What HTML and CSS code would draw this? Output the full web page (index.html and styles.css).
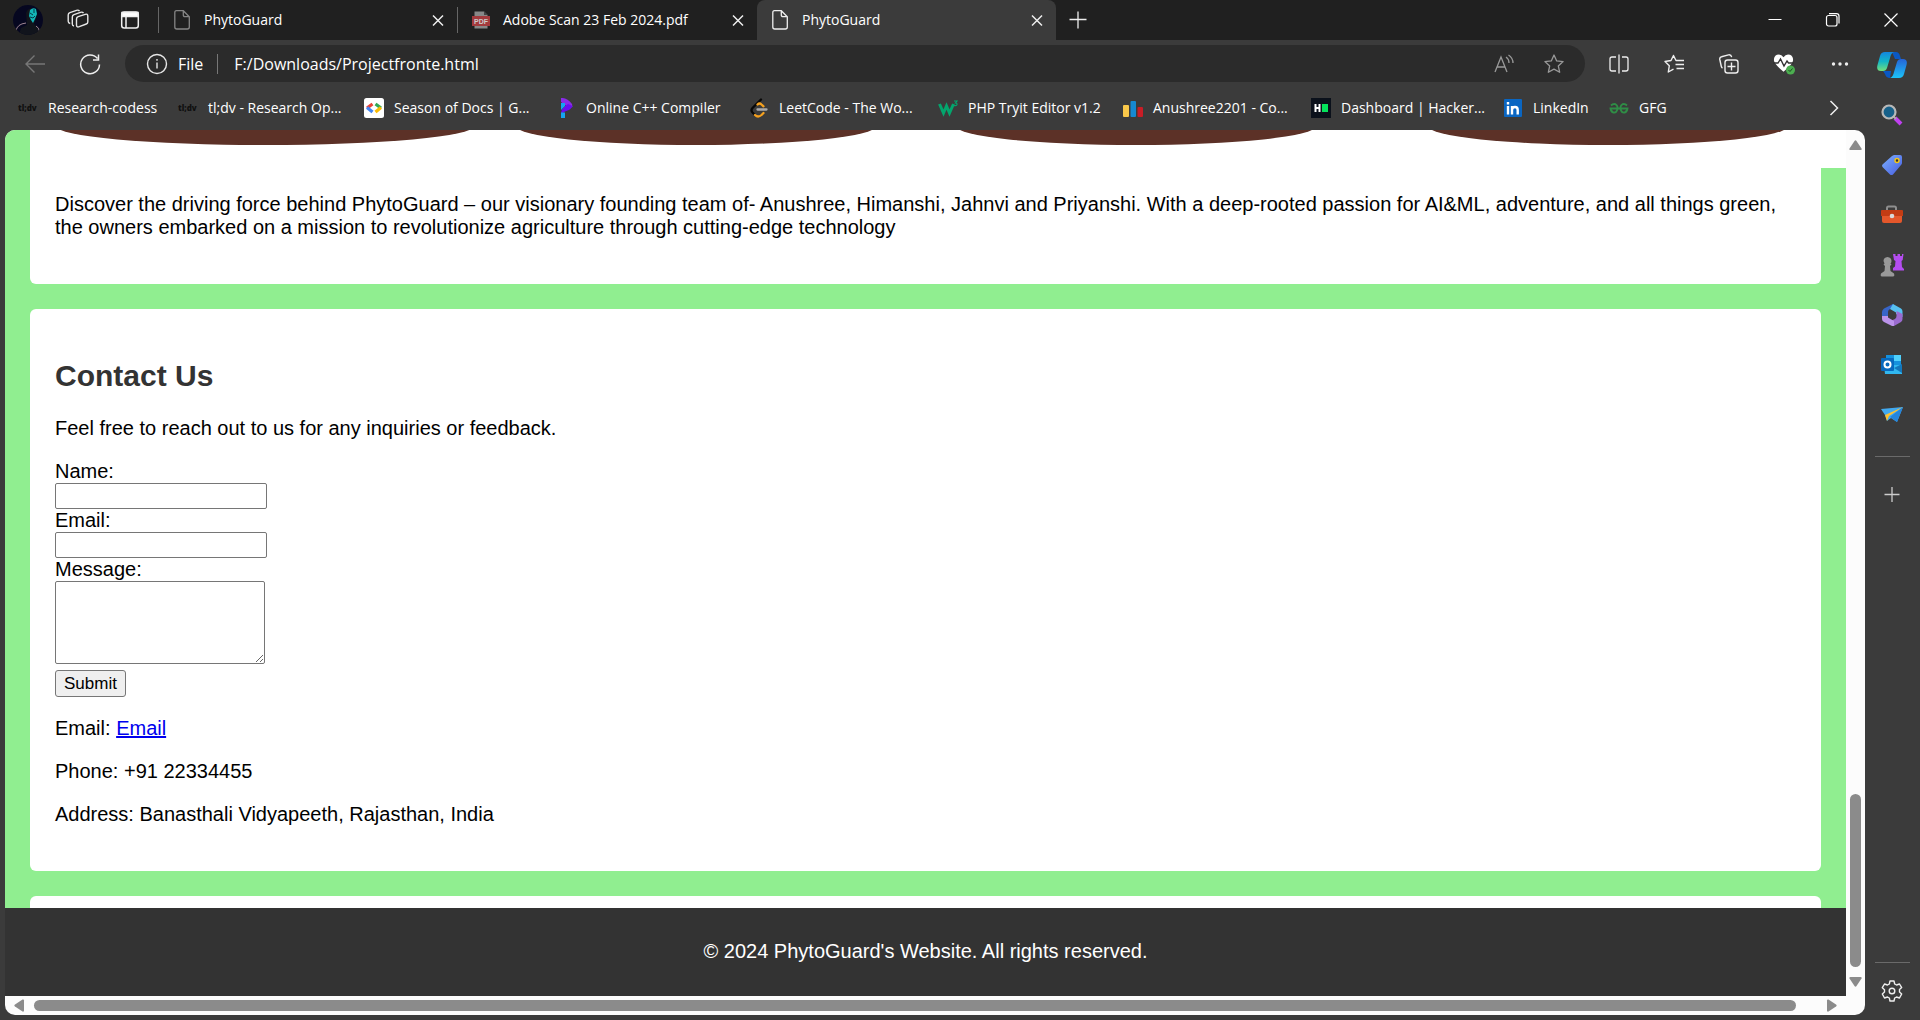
FILE: index.html
```html
<!DOCTYPE html>
<html lang="en">
<head>
<meta charset="utf-8">
<title>PhytoGuard</title>
<link rel="stylesheet" href="styles.css">
</head>
<body>
<header class="titlebar">
  <div class="title-tools">
    <button class="icon-btn" aria-label="Profile"><svg width="30" height="30" viewBox="0 0 30 30"><defs><clipPath id="av"><circle cx="15" cy="15" r="15"/></clipPath></defs><g clip-path="url(#av)"><path fill="#060720" d="M0 0h30v30H0z"/><path fill="#11141c" d="M13 8q2-6 8-4 4 4 2 10l-2 5 5 4 2 7H6l2-7 6-3z"/><path fill="#12b5b8" d="M17 5q3-3 6-1l1 5-2 5-2 4-2-3-2-4z"/><path stroke="#063a4a" d="M17 8l3 2m-3 2 3 1M21 4v4m1 3-2 2"/><path d="M3 26q1-7 10-8M27 28q-1-6-4-7" stroke="#a08694" fill="none"/></g></svg></button>
    <button class="icon-btn" aria-label="Workspaces"><svg width="22" height="22" viewBox="0 0 22 22" fill="none" stroke="#e6e6e6" stroke-width="1.4"><path d="M9.500 10q0-1.700 1.700-2.300l7-2.400q2.600-.8 2.600 1.700v6q0 1.500-1.500 2l-7 2.700q-2.800 1-2.800-1.700zM7 17q-1.700-.3-1.700-2V8q0-1.700 1.700-2.300l6.500-2.400q2-.7 3 .9M3.200 14.500q-2-.4-2-2.200V6q0-1.700 1.700-2.300L9.500 1.300q2-.7 3 .9"/></svg></button>
    <button class="icon-btn" aria-label="Tab actions"><svg width="20" height="20" viewBox="0 0 20 20" fill="none" stroke="#f0f0f0" stroke-width="1.500"><rect x="1.700" y="2" width="16.600" height="16" rx="2.500"/><path fill="#fff" d="M2 2.500h16v4H2z"/><path d="M6 7v11"/></svg></button>
  </div>
  <nav class="tabs" aria-label="Tabs">
    <div class="tab">
      <svg class="i20" viewBox="0 0 20 20" fill="none" stroke="#858585" stroke-width="1.300"><path d="M4.500.7h6.800l6 6V17q0 2-2 2h-10.500q-2 0-2-2V2.700q0-2 1.700-2zM11.300.7v4.300q0 1.700 1.700 1.700h4.300"/></svg>
      <span class="tab-title">PhytoGuard</span>
      <button class="close" aria-label="Close tab"><svg class="i20" viewBox="0 0 20 20" stroke="#eee" stroke-width="1.500"><path d="M5 5.500l10 10M15 5.500l-10 10"/></svg></button>
    </div>
    <div class="tab">
      <svg class="i20" viewBox="0 0 20 20"><path d="M3 1h10l4 4v14H3z" fill="#888" stroke="#202020"/><path d="M13 1v4h4" fill="#444"/><rect x="1" y="6" width="18" height="10" fill="#a33a3d"/><text x="10" y="14" class="pdf-mark">PDF</text></svg>
      <span class="tab-title">Adobe Scan 23 Feb 2024.pdf</span>
      <button class="close" aria-label="Close tab"><svg class="i20" viewBox="0 0 20 20" stroke="#eee" stroke-width="1.500"><path d="M5 5.500l10 10M15 5.500l-10 10"/></svg></button>
    </div>
    <div class="tab tab-active">
      <svg class="i20" viewBox="0 0 20 20" fill="none" stroke="#eee" stroke-width="1.300"><path d="M4.500.7h6.800l6 6V17q0 2-2 2h-10.500q-2 0-2-2V2.700q0-2 1.700-2zM11.300.7v4.300q0 1.700 1.700 1.700h4.300"/></svg>
      <span class="tab-title">PhytoGuard</span>
      <button class="close" aria-label="Close tab"><svg class="i20" viewBox="0 0 20 20" stroke="#eee" stroke-width="1.500"><path d="M5 5.500l10 10M15 5.500l-10 10"/></svg></button>
    </div>
    <button class="icon-btn new-tab" aria-label="New tab"><svg class="i20" viewBox="0 0 20 20" stroke="#eee" stroke-width="1.300"><path d="M10 1.500v17M1.500 9.500h17"/></svg></button>
  </nav>
  <div class="window-controls">
    <button class="icon-btn" aria-label="Minimize"><svg class="i20" viewBox="0 0 20 20" stroke="#fff"><path d="M3.500 9.500h13"/></svg></button>
    <button class="icon-btn" aria-label="Restore"><svg class="i20" viewBox="0 0 20 20" fill="none" stroke="#fff" stroke-width="1.200"><rect x="3.500" y="5.500" width="10.500" height="10.500" rx="2"/><path d="M6 3.600h7.500q2.500 0 2.500 2.500v7.500"/></svg></button>
    <button class="icon-btn" aria-label="Close window"><svg class="i20" viewBox="0 0 20 20" stroke="#fff" stroke-width="1.200"><path d="M3.500 3.500l13 13M16.500 3.500l-13 13"/></svg></button>
  </div>
</header>

<div class="frame">
  <div class="browser">
    <div class="toolbar">
      <button class="icon-btn back" aria-label="Back"><svg class="i20" viewBox="0 0 20 20" fill="none" stroke="#777" stroke-width="1.400"><path d="M20 10H1M9.500 1.500L1 10l8.500 8.500"/></svg></button>
      <button class="icon-btn reload" aria-label="Refresh"><svg width="22" height="22" viewBox="0 0 22 22" fill="none" stroke="#eee" stroke-width="1.500"><path d="M20.500 11.500A9.400 9.400 0 1 1 18.500 5.500M19.500 1.500v5.500H14"/></svg></button>
      <div class="address">
        <svg class="info" width="22" height="22" viewBox="0 0 22 22" fill="none" stroke="#e6e6e6" stroke-width="1.400"><circle cx="11" cy="11" r="9.500"/><path d="M11 9.500v6M11 6v1.700"/></svg>
        <span class="scheme">File</span>
        <input class="url" type="text" aria-label="Address" value="F:/Downloads/Projectfronte.html">
        <button class="icon-btn" aria-label="Read aloud"><svg class="i20" viewBox="0 0 20 20" fill="none" stroke="#999" stroke-width="1.300"><path d="M1 18L7 3l6 15M3 13h8M12 3q3 2 3 6M14.500 1q4.500 3 4.500 8"/></svg></button>
        <button class="icon-btn" aria-label="Add to favorites"><svg class="i20" viewBox="0 0 20 20" fill="none" stroke="#999" stroke-width="1.300" stroke-linejoin="round"><path d="M10 1l2.700 5.900 6.400.7-4.800 4.300 1.400 6.400L10 15.100l-5.700 3.200 1.400-6.400L.9 7.600l6.400-.7z"/></svg></button>
      </div>
      <div class="actions">
        <button class="icon-btn" aria-label="Split screen"><svg class="i20" viewBox="0 0 20 20" fill="none" stroke="#eee" stroke-width="1.300"><path d="M7 3H3Q1 3 1 5v10q0 2 2 2h4M13 3h4q2 0 2 2v10q0 2-2 2h-4M10 .5v19"/></svg></button>
        <button class="icon-btn" aria-label="Favorites"><svg class="i20" viewBox="0 0 20 20" fill="none" stroke="#eee" stroke-width="1.400" stroke-linejoin="round"><path d="M13 6.500h-1L9.500 1.500 7 6.500l-6 1 4.300 4.300L4.300 18l5.200-2.800M13 6.500h7M11.500 10.500H20M12.500 14.500H20"/></svg></button>
        <button class="icon-btn" aria-label="Collections"><svg class="i20" viewBox="0 0 20 20" fill="none" stroke="#eee" stroke-width="1.400"><rect x="6" y="6" width="13" height="13" rx="2.500"/><path d="M12.500 8.500v8M8.500 12.500h8M3.500 14q-1-.5-1.300-2L.8 5.500Q.4 3.300 2.500 2.800L9.500.9q2.500-.5 3.200 2.300"/></svg></button>
        <button class="icon-btn" aria-label="Browser essentials"><svg width="22" height="22" viewBox="0 0 22 22"><path fill="#fff" d="M10.500 4.200Q13 .5 17 1.800q3.500 1.500 3 6-.5 3.500-9.500 11-9-7.500-9.500-11-.5-4.500 3-6 4-1.300 6.500 2.400z"/><path d="M0 10h5l2.500-4 3.500 7 3-5 1.500 2H21" fill="none" stroke="#333" stroke-width="1.400"/><circle cx="17.500" cy="17" r="4.500" fill="#4cae50"/><path d="M15.500 17l1.500 1.500 2.500-3" fill="none" stroke="#1d4d20"/></svg></button>
        <button class="icon-btn" aria-label="Settings and more"><svg class="i20" viewBox="0 0 20 20" fill="#eee"><circle cx="3.500" cy="10" r="1.700"/><circle cx="10" cy="10" r="1.700"/><circle cx="16.500" cy="10" r="1.700"/></svg></button>
      </div>
    </div>

    <nav class="bookmarks" aria-label="Favorites bar">
      <a class="bookmark" href="#"><span class="tldv">tl;dv</span>Research-codess</a>
      <a class="bookmark" href="#"><span class="tldv">tl;dv</span>tl;dv - Research Op...</a>
      <a class="bookmark" href="#"><svg class="i20" viewBox="0 0 20 20" fill="none" stroke-width="3.200"><rect width="20" height="20" rx="2.500" fill="#fff"/><path d="M8.500 6L3 10" stroke="#ea4335"/><path d="M3 9.500L8.500 14" stroke="#4285f4"/><path d="M11.500 6l5.500 4" stroke="#34a853"/><path d="M17 9.500L11.500 14" stroke="#fbbc04"/></svg>Season of Docs | G...</a>
      <a class="bookmark" href="#"><svg class="i20" viewBox="0 0 20 20"><path fill="#8a2be8" d="M5 0q6-.5 11 6l.5 3L13 10 5 4z"/><path fill="#6a0df0" d="M16.500 8Q15 12 9 13.500L5 16q0-6 7-10z"/><path fill="#14a5f0" d="M5 5h4v3l-4 4zM5 14.500h4V20H5z"/></svg>Online C++ Compiler</a>
      <a class="bookmark" href="#"><svg class="i20" viewBox="0 0 20 20" fill="none" stroke-width="2.300" stroke-linecap="round"><path stroke="#080808" d="M12 1.500L3.500 10q-2 2.300 0 4.500l2.500 2.500"/><path stroke="#f5a11f" d="M8.500 6.500q2-2 4 0l2 1.800M6 17q3 3 6.500 0l2-2"/><path stroke="#aaa" d="M8.500 11.500h9"/></svg>LeetCode - The Wo...</a>
      <a class="bookmark" href="#"><svg class="i20" viewBox="0 0 20 20" fill="none" stroke="#04a56d"><path stroke-width="3" d="M1.500 6l4 9 3-7 3 7 4-9"/><path d="M16 3h3l-1.500 2q2 0 1.300 2-.8 1-2.800.5" stroke-width="1.200"/></svg>PHP Tryit Editor v1.2</a>
      <a class="bookmark" href="#"><svg class="i20" viewBox="0 0 20 20"><rect y="7" width="6" height="12" rx="1" fill="#fac84a"/><rect x="7.500" y="3" width="5.500" height="16" rx="1" fill="#1689d2"/><rect x="14.500" y="9" width="5.500" height="10" rx="1" fill="#c91d26"/></svg>Anushree2201 - Co...</a>
      <a class="bookmark" href="#"><svg class="i20" viewBox="0 0 20 20"><path fill="#0b111b" d="M0 0h20v20H0z"/><path d="M4.500 6v8M8.500 6v8M4 10h5" stroke="#fff" stroke-width="2"/><path fill="#05e35c" d="M11 6h6v8h-6z"/></svg>Dashboard | Hacker...</a>
      <a class="bookmark" href="#"><svg class="i20" viewBox="0 0 20 20"><rect x="1" y="1" width="18" height="18" rx="1" fill="#0a66c2"/><path fill="none" stroke="#fff" stroke-width="2.400" d="M5 8v8.500M9 8v8.500M9 12q0-3 3-3 2.700 0 2.700 3v4.500M5 4v2.500"/></svg>LinkedIn</a>
      <a class="bookmark" href="#"><svg class="i20" viewBox="0 0 20 20" fill="none" stroke="#2f8d46" stroke-width="1.800"><path d="M2 7.500Q4 5.500 6.500 6.200 9 7.500 8.500 11q-1 4-4 3.500-2.500-.5-3-4h17q-.5 3.500-3 4-3 .5-4-3.500-.5-3.500 2-4.800Q16 5.500 18 7.500"/></svg>GFG</a>
      <button class="icon-btn overflow" aria-label="More favorites"><svg class="i20" viewBox="0 0 20 20" fill="none" stroke="#eee" stroke-width="1.500"><path d="M6.500 3l7 7-7 7"/></svg></button>
    </nav>

    <div class="viewport">
      <div class="page">
        <main class="sections">
          <section class="card team">
            <svg class="portraits" viewBox="0 0 1791 38" preserveAspectRatio="none"><g fill="#5c3127"><ellipse cx="210" cy="-4" rx="209" ry="19"/><ellipse cx="641" cy="-4" rx="180" ry="19"/><ellipse cx="1081" cy="-4" rx="180" ry="19"/><ellipse cx="1553" cy="-4" rx="180" ry="19"/></g></svg>
            <p>Discover the driving force behind PhytoGuard – our visionary founding team of- Anushree, Himanshi, Jahnvi and Priyanshi. With a deep-rooted passion for AI&amp;ML, adventure, and all things green, the owners embarked on a mission to revolutionize agriculture through cutting-edge technology</p>
          </section>
          <section class="card">
            <h2>Contact Us</h2>
            <p>Feel free to reach out to us for any inquiries or feedback.</p>
            <form class="contact-form">
              <label for="name">Name:</label>
              <input class="field" type="text" id="name">
              <label for="email">Email:</label>
              <input class="field" type="email" id="email">
              <label for="message">Message:</label>
              <textarea class="message" id="message"></textarea>
              <button class="submit" type="submit">Submit</button>
            </form>
            <p>Email: <a href="#">Email</a></p>
            <p>Phone: +91 22334455</p>
            <p>Address: Banasthali Vidyapeeth, Rajasthan, India</p>
          </section>
          <section class="card card-next"></section>
        </main>
        <footer class="footer">© 2024 PhytoGuard's Website. All rights reserved.</footer>
      </div>
      <div class="scroll-y">
        <svg width="13" height="11" viewBox="0 0 13 11"><path fill="#8b8b8b" d="M5.500 1q1-1.300 2 0l5 7.500q.5 1.500-1 1.500h-10Q0 10 .5 8.500z"/></svg>
        <div class="thumb-y"></div>
        <svg width="13" height="11" viewBox="0 0 13 11"><path fill="#8b8b8b" d="M5.500 10q1 1.300 2 0l5-7.500Q13 1 11.500 1h-10Q0 1 .5 2.500z"/></svg>
      </div>
      <div class="scroll-x">
        <svg width="11" height="13" viewBox="0 0 11 13"><path fill="#8b8b8b" d="M1 5.500q-1.300 1 0 2l7.500 5q1.500.5 1.500-1v-10Q10 0 8.500.5z"/></svg>
        <div class="thumb-x"></div>
        <svg width="11" height="13" viewBox="0 0 11 13"><path fill="#8b8b8b" d="M10 5.500q1.300 1 0 2l-7.500 5Q1 13 1 11.500v-10Q1 0 2.500.5z"/></svg>
      </div>
    </div>
  </div>

  <aside class="sidebar">
    <button class="icon-btn copilot" aria-label="Copilot"><svg width="30" height="28" viewBox="0 0 30 28"><defs><linearGradient id="c1" x2="0" y2="1"><stop stop-color="#1386e0"/><stop offset=".5" stop-color="#12b5c7"/><stop offset="1" stop-color="#73e07b"/></linearGradient><linearGradient id="c2" x2="0" y2="1"><stop stop-color="#2563d8"/><stop offset="1" stop-color="#1cc3f7"/></linearGradient></defs><path fill="#0a58c4" d="M15 1h4q3 0 4 4l1 3h-6zM6 20h8l-1 7q-4 0-5-4z"/><path fill="url(#c1)" d="M8 1h9q-3 1-4 6l-3 10q-1 3-4 3H4q-5 0-3.500-6L3 5q1-4 5-4z"/><path fill="url(#c2)" d="M22 27h-9q3-1 4-6l3-10q1-3 4-3h2q5 0 3.500 6L27 23q-1 4-5 4z"/></svg></button>
    <button class="icon-btn" aria-label="Search"><svg width="22" height="22" viewBox="0 0 22 22"><path d="M14 14l6 6" stroke="#c040f0" stroke-width="4"/><path d="M12 12l3 3" stroke="#aaa" stroke-width="2"/><circle cx="8" cy="8" r="6.500" fill="#17618a" stroke="#b8b8b8" stroke-width="2.200"/></svg></button>
    <button class="icon-btn" aria-label="Shopping"><svg width="22" height="22" viewBox="0 0 22 22"><defs><linearGradient id="tg" x2="1" y2="1"><stop stop-color="#7db2ff"/><stop offset="1" stop-color="#465be0"/></linearGradient></defs><path fill="url(#tg)" d="M13 1h6q2 0 2 2v6q0 1-1 2l-8 9.500q-1.500 1-3 0L1.500 13q-1-1.500 0-2.500L11 2z"/><circle cx="16" cy="6.500" r="2" fill="#333" stroke="#f2c51a" stroke-width="1.500"/></svg></button>
    <button class="icon-btn" aria-label="Tools"><svg width="24" height="22" viewBox="0 0 24 22"><path d="M7 7V4q0-1.500 1.500-1.500h6Q16 2.500 16 4v3" fill="none" stroke="#8e8e8e" stroke-width="2"/><path fill="#e4572b" d="M2 10h20v7q0 2-2 2H4q-2 0-2-2z"/><path fill="#c33c14" d="M2 6h20q1 0 1 1v5H1V7q0-1 1-1z"/><circle cx="12" cy="12" r="2.300" fill="#d9d9d9"/></svg></button>
    <button class="icon-btn" aria-label="Games"><svg width="24" height="24" viewBox="0 0 24 24"><path fill="#b44df0" d="M13 1h2.500v2h2V1H20v2h2V1h1.500l-.8 6-1.200 1 .5 6 2 2v1.500H13V15l2-1.500.5-5.500-1.500-1z"/><path fill="#999" d="M3.500 8q0-3.500 4-4 4 .5 4 4 0 1.500-1 2.500l1 1-1.500 1.500.5 5 3.500 2.500q1 3-1 3H2q-2 0-1-3l3.500-2.500.5-5L3.500 11.500l1-1z"/></svg></button>
    <button class="icon-btn" aria-label="Microsoft 365"><svg width="22" height="22" viewBox="0 0 22 22"><path fill="#3765c8" d="M12 0L3 4.500Q1 6 1 8v7l6-3V8q0-2 2-3l5-2.500z"/><path fill="#56c0f0" d="M12 0l8 4.500q1.500 1 1.500 3V13L15 10V8.500L9 5z"/><path fill="#9b6bd0" d="M21.500 10v5q0 2-1.500 3l-7 4-6-4 7-3q1.500-1 1.500-3V7z"/><path fill="#bb93ea" d="M1 12v3q0 2 2 3l8 4h2v-5l-6-3.500V12z"/></svg></button>
    <button class="icon-btn" aria-label="Outlook"><svg width="22" height="22" viewBox="0 0 22 22"><path fill="#1591dd" d="M5 1h15v13H5z"/><path fill="#4fd0fb" d="M13 1h7v6h-7z"/><path fill="#31b8f0" d="M3 11h18v9H4z"/><path fill="#1477bb" d="M21 10v9l-8-5z"/><rect y="4" width="13" height="13" rx="1" fill="#0869bd"/><circle cx="6.500" cy="10.500" r="3" fill="none" stroke="#fff" stroke-width="2"/></svg></button>
    <button class="icon-btn" aria-label="Drop"><svg width="22" height="22" viewBox="0 0 22 22"><path fill="#42aaf0" d="M0 5l22-2-6 15-6-4-4 3-2-6z"/><path fill="#ffc12e" d="M22 3L4 11l2 6 2-5z"/><path fill="#2585dc" d="M22 3l-6 15-7-5z"/></svg></button>
    <hr class="rule">
    <button class="icon-btn" aria-label="Customize"><svg class="i20" viewBox="0 0 20 20" stroke="#ccc" stroke-width="1.300"><path d="M10 2v15M2.500 9.500h15"/></svg></button>
    <div class="spacer"></div>
    <hr class="rule">
    <button class="icon-btn gear" aria-label="Settings"><svg width="22" height="22" viewBox="0 0 22 22" fill="none" stroke="#eee" stroke-width="1.400" stroke-linejoin="round"><path d="M9 1h4l.7 3 1.800 1 3-1 2.200 3.600-2.200 2v2.300l2.200 2L18.500 18l-3-1-1.800 1-.7 3H9l-.7-3-1.800-1-3 1-2.200-4 2.200-2V9.700l-2.200-2L3.500 4l3 1 1.800-1z"/><circle cx="11" cy="11" r="2.800"/></svg></button>
  </aside>
</div>
</body>
</html>
```
FILE: styles.css
```css
* { box-sizing: border-box; }

body {
  margin: 0;
  min-height: 100vh;
  display: flex;
  flex-direction: column;
  background: #3b3b3b;
  color: #fff;
  font: 14px/20px "Segoe UI", "Open Sans", sans-serif;
}

.icon-btn,
.close {
  display: flex;
  align-items: center;
  justify-content: center;
  padding: 0;
  border: 0;
  background: none;
}

.icon-btn svg,
.close svg { display: block; }

.i20 {
  width: 20px;
  height: 20px;
  flex: none;
}

/* Title bar and tabs */
.titlebar {
  display: flex;
  height: 40px;
  background: #202020;
}

.title-tools {
  width: 159px;
  display: flex;
  align-items: center;
  gap: 31px;
  padding-left: 13px;
  border-right: 1px solid #555;
  border-image: linear-gradient(#0000 8px, #666 8px, #666 32px, #0000 32px) 1;
}

.title-tools .icon-btn:first-child { margin-right: -7px; }

.tabs {
  flex: 1;
  display: flex;
}

.tab {
  width: 299px;
  display: flex;
  align-items: center;
  gap: 12px;
  padding: 0 9px 0 13px;
}

.tab:first-child {
  border-right: 1px solid;
  border-image: linear-gradient(#0000 8px, #666 8px, #666 32px, #0000 32px) 1;
}

.tab-active {
  background: #3b3b3b;
  border-radius: 8px 8px 0 0;
}

.tab-title { flex: 1; white-space: nowrap; }

.pdf-mark {
  font: bold 7px "Liberation Sans", sans-serif;
  fill: #ccc;
  text-anchor: middle;
}

.new-tab { width: 44px; }

.window-controls { display: flex; }
.window-controls .icon-btn { width: 58px; }

/* Toolbar */
.frame {
  flex: 1;
  display: flex;
}

.browser {
  flex: 1;
  min-width: 0;
  display: flex;
  flex-direction: column;
}

.toolbar {
  display: flex;
  align-items: center;
  padding: 5px 15px 4px 25px;
}

.reload { margin: 0 24px 0 34px; }

.address {
  flex: 1;
  height: 37px;
  display: flex;
  align-items: center;
  gap: 30px;
  padding: 0 21px;
  border-radius: 19px;
  background: #2b2b2b;
  font-size: 16px;
}

.scheme {
  margin-left: -20px;
  padding-right: 14px;
  border-right: 1px solid #777;
}

.url {
  flex: 1;
  margin-left: -14px;
  padding: 0;
  border: 0;
  background: none;
  color: #fff;
  font: inherit;
}

.actions {
  display: flex;
  justify-content: space-between;
  width: 241px;
  margin-left: 24px;
}

/* Favorites bar */
.bookmarks {
  display: grid;
  grid-template-columns: 160px 186px 192px 193px 189px 185px 188px 192px 106px 1fr 20px;
  align-items: center;
  height: 44px;
  padding: 0 21px 0 18px;
}

.bookmark {
  display: flex;
  align-items: center;
  gap: 10px;
  color: #fff;
  text-decoration: none;
  white-space: nowrap;
}

.tldv {
  width: 20px;
  color: #101010;
  font-size: 8px;
  font-weight: 800;
}

/* Page viewport and scrollbars */
.viewport {
  flex: 1;
  display: grid;
  grid-template-columns: minmax(0, 1fr) 19px;
  grid-template-rows: 1fr 19px;
  margin: 0 0 5px 5px;
  border-radius: 10px;
  overflow: hidden;
  background: #fcfcfc;
}

.scroll-y {
  display: flex;
  flex-direction: column;
  align-items: center;
  padding: 10px 0 9px;
}

.thumb-y {
  width: 11px;
  height: 173px;
  margin: auto 0 9px;
  border-radius: 6px;
  background: #8b8b8b;
}

.scroll-x {
  display: flex;
  align-items: center;
  gap: 9px;
  padding: 0 9px;
}

.thumb-x {
  flex: 1;
  height: 11px;
  margin-right: 21px;
  border-radius: 6px;
  background: #8b8b8b;
}

/* PhytoGuard page */
.page {
  display: flex;
  flex-direction: column;
  overflow: hidden;
  background: #90ee90;
  color: #000;
  font: 20px/23px "Liberation Sans", Arial, sans-serif;
}

.sections {
  display: flex;
  flex-direction: column;
  gap: 25px;
  padding: 0 25px;
}

.card {
  padding: 25px;
  border-radius: 6px;
  background: #fff;
}

.card p { margin: 20px 0; }

.card h2 {
  margin: 25px 0;
  color: #333;
  font-size: 30px;
  line-height: 33px;
}

.team {
  padding-top: 0;
  border-radius: 0 0 6px 6px;
}

.team p { margin-top: 25px; }

.portraits {
  display: block;
  width: calc(100% + 50px);
  height: 38px;
  background: #fff;
}

.card-next {
  height: 12px;
  padding: 0;
  border-radius: 6px 6px 0 0;
}

.contact-form {
  display: flex;
  flex-direction: column;
  align-items: flex-start;
}

.field,
.message {
  border: 1px solid #767676;
  border-radius: 2px;
  background: #fff;
}

.field {
  width: 212px;
  height: 26px;
}

.message {
  width: 210px;
  height: 83px;
  margin-bottom: 6px;
}

.submit {
  height: 27px;
  padding: 0 8px;
  border: 1px solid #767676;
  border-radius: 3px;
  background: #efefef;
  color: #000;
  font: 17px/20px "Liberation Sans", Arial, sans-serif;
}

.footer {
  flex: 1;
  padding: 32px 32px 30px;
  background: #333;
  color: #fff;
  text-align: center;
}

/* Sidebar */
.sidebar {
  width: 55px;
  display: flex;
  flex-direction: column;
  align-items: center;
  padding: 0 1px 4px 0;
}

.sidebar .icon-btn {
  width: 54px;
  height: 50px;
}

.rule {
  width: 35px;
  margin: 16px 0 13px;
  border: 0;
  border-top: 1px solid #6a6a6a;
}

.spacer { flex: 1; }

.spacer + .rule { margin: 0 0 3px; }
```
